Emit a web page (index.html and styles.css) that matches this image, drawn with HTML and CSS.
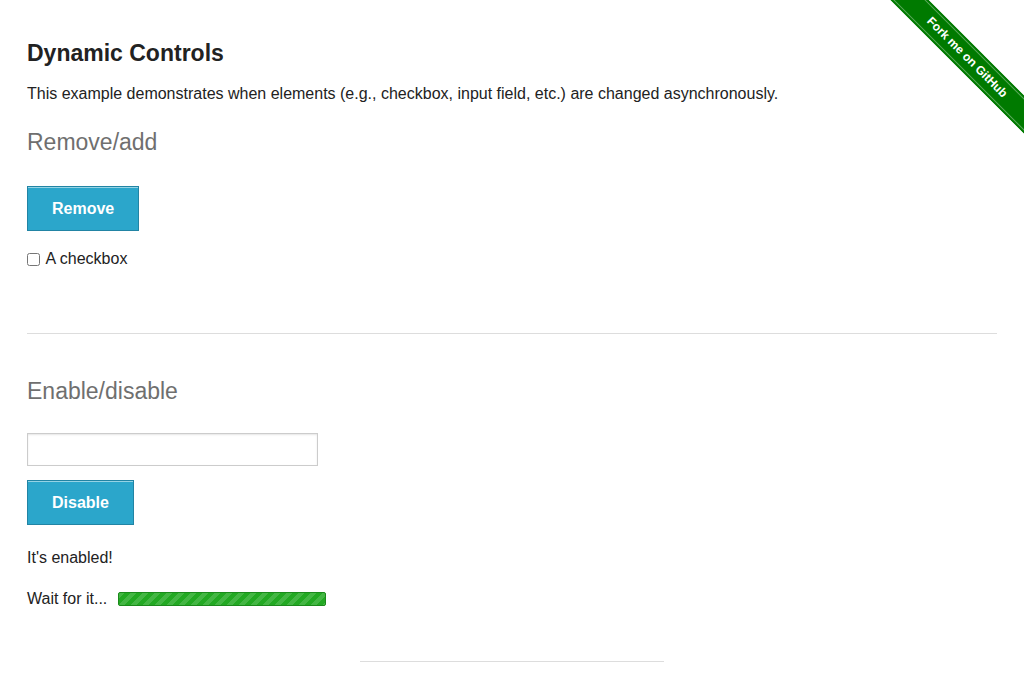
FILE: index.html
```html
<!DOCTYPE html>
<html lang="en">
<head>
<meta charset="utf-8">
<title>The Internet</title>
<link rel="stylesheet" href="styles.css">
</head>
<body>
<a class="ribbon-wrap" href="#"><span class="ribbon">Fork me on GitHub</span></a>
<div class="content">
  <h3 class="title">Dynamic Controls</h3>
  <p class="intro">This example demonstrates when elements (e.g., checkbox, input field, etc.) are changed asynchronously.</p>

  <h4 class="subhead subhead-first">Remove/add</h4>
  <button class="button btn-remove" type="button">Remove</button>
  <label class="check-row"><input class="check" type="checkbox"> A checkbox</label>

  <hr class="divider">

  <h4 class="subhead subhead-second">Enable/disable</h4>
  <input class="text-input" type="text">
  <button class="button btn-disable" type="button">Disable</button>
  <p class="message">It's enabled!</p>
  <div class="loading">
    <span>Wait for it...</span>
    <div class="progress"></div>
  </div>
</div>
<hr class="footer-rule">
</body>
</html>
```
FILE: styles.css
```css
html, body {
  margin: 0;
  padding: 0;
  background: #fff;
}
body {
  font-family: "Liberation Sans", Arial, sans-serif;
  font-size: 16px;
  line-height: 20px;
  color: #222;
  overflow: hidden;
}
.content {
  width: 970px;
  padding: 0 27px;
  display: flex;
  flex-direction: column;
  align-items: flex-start;
}
.title {
  margin: 39px 0 0;
  font-size: 23px;
  line-height: 28px;
  font-weight: bold;
  color: #222;
}
.intro {
  margin: 17px 0 0;
}
.subhead {
  margin: 25px 0 0;
  font-size: 23px;
  line-height: 26px;
  font-weight: normal;
  color: #6f6f6f;
}
.subhead-second {
  margin-top: 44px;
}
.button {
  box-sizing: border-box;
  height: 45px;
  padding: 0 24px;
  background: #2ba6cb;
  border: 1px solid #2284a4;
  box-shadow: inset 0 1px 0 rgba(255, 255, 255, 0.5);
  color: #fff;
  font-family: "Liberation Sans", Arial, sans-serif;
  font-size: 16px;
  font-weight: bold;
  cursor: pointer;
}
.btn-remove {
  margin-top: 31px;
}
.check-row {
  margin-top: 18px;
  display: flex;
  align-items: center;
  white-space: pre;
}
.check {
  margin: 0 2px 0 0;
  width: 13px;
  height: 13px;
}
.divider {
  align-self: stretch;
  margin: 64px 0 0;
  border: 0;
  border-top: 1px solid #ddd;
  height: 0;
}
.text-input {
  box-sizing: border-box;
  margin: 29px 0 0;
  width: 291px;
  height: 33px;
  border: 1px solid #ccc;
  box-shadow: inset 0 1px 2px rgba(0, 0, 0, 0.1);
  background: #fff;
  padding: 0 6px;
  font-size: 14px;
  outline: none;
}
.btn-disable {
  margin-top: 14px;
}
.message {
  margin: 23px 0 0;
}
.loading {
  margin-top: 21px;
  display: flex;
  align-items: center;
  gap: 11px;
}
.progress {
  box-sizing: border-box;
  width: 208px;
  height: 14px;
  border: 1px solid #1b8a1b;
  border-radius: 2px;
  background-color: #23a923;
  background-image: linear-gradient(135deg,
    rgba(255, 255, 255, 0.15) 25%, transparent 25%,
    transparent 50%, rgba(255, 255, 255, 0.15) 50%,
    rgba(255, 255, 255, 0.15) 75%, transparent 75%);
  background-size: 12px 12px;
}
.footer-rule {
  width: 304px;
  margin: 52px auto 0;
  border: 0;
  border-top: 1px solid #ddd;
  height: 0;
}
.ribbon-wrap {
  position: absolute;
  top: 0;
  right: 0;
  width: 149px;
  height: 149px;
  overflow: hidden;
  text-decoration: none;
}
.ribbon {
  position: absolute;
  left: -8.5px;
  top: 44px;
  width: 200px;
  height: 27px;
  box-sizing: border-box;
  transform: rotate(45deg);
  background: #007a00;
  color: #fff;
  font-family: "Liberation Sans", Arial, sans-serif;
  font-size: 12px;
  font-weight: bold;
  line-height: 27px;
  text-align: center;
  box-shadow: inset 0 2px 0 #007a00, inset 0 3px 0 rgba(255,255,255,0.35), inset 0 -2px 0 #007a00, inset 0 -3px 0 rgba(255,255,255,0.35);
}
```
